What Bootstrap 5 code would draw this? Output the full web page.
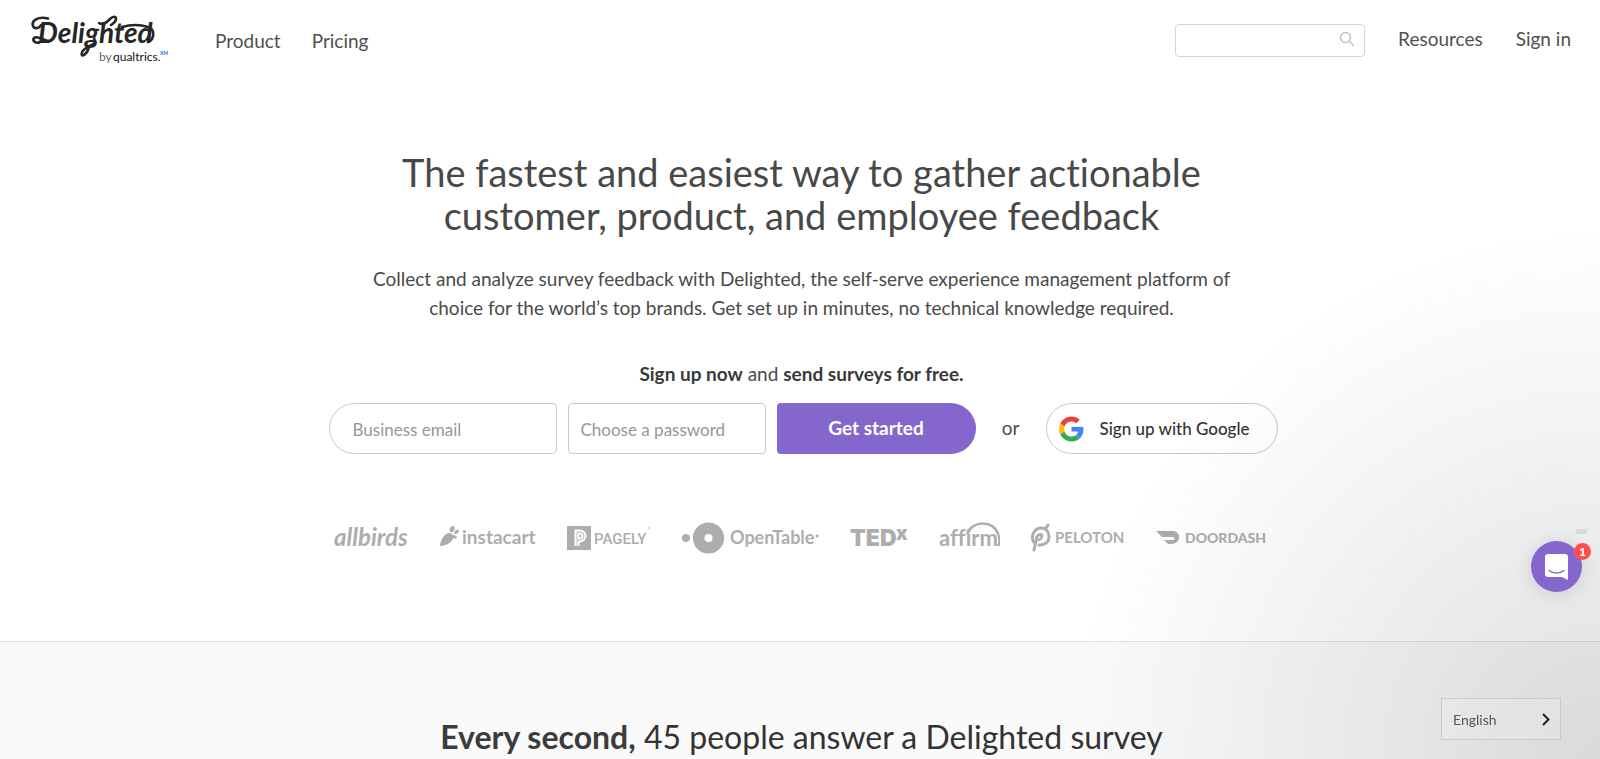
<!DOCTYPE html>
<html lang="en">
<head>
<meta charset="utf-8">
<meta name="viewport" content="width=device-width, initial-scale=1">
<title>Delighted</title>
<link rel="stylesheet" href="https://cdn.jsdelivr.net/npm/bootstrap@5.3.0/dist/css/bootstrap.min.css">
<style>
  body { font-family: Lato, "Open Sans", sans-serif; color: #4a4a4a; background: #fff; overflow-x: hidden; font-variant-ligatures: none; }
  .site-nav { padding: 14px 29px 0 30px; }
  .site-nav .nav-link { color: #505050; font-size: 19px; line-height: 24px; padding: 0; }
  .nav-main { gap: 31px; margin-left: 47px; padding-top: 15px; }
  .nav-side { gap: 33px; }
  .nav-side .nav-link { padding-top: 13px; }
  .search-box { width: 190px; margin-top: 10px; }
  .search-box .form-control { height: 33px; border-color: #d6d6d6; border-radius: 4px; padding-right: 36px; }
  .search-btn { position: absolute; right: 10px; top: 7px; border: 0; background: none; padding: 0; line-height: 0; }
  .hero { padding: 83px 16px 86px 19px; }
  .hero h1 { font-size: 38px; line-height: 43px; font-weight: 400; max-width: 860px; color: #484848; }
  .hero-copy { font-size: 19px; line-height: 29px; max-width: 880px; margin-top: 27px; }
  .signup-lead { font-size: 19px; line-height: 28px; margin-top: 38px; }
  .signup-lead strong { font-weight: 700; color: #3a3a3a; }
  .signup-row { margin-top: 15px; padding-left: 3px; }
  .signup-row .form-control, .signup-row .btn { height: 51px; font-size: 17px; }
  .signup-fields { gap: 11px; }
  .signup-row .form-control { border-color: #c8c8c8; border-radius: 4px; padding: 2px 12px 0; background: #fff; }
  .signup-row .form-control::placeholder { color: #979797; opacity: 1; }
  .signup-row .email-field { width: 228px; border-radius: 26px 4px 4px 26px; padding-left: 23px; }
  .signup-row .password-field { width: 198px; }
  .signup-row .btn-start { width: 199px; background: #8566cc; color: #fff; font-size: 19px; font-weight: 700; border: 0; border-radius: 4px 26px 26px 4px; }
  .or-word { width: 70px; font-size: 19px; }
  .signup-row .btn-google { width: 232px; border: 1px solid #c8c8c8; border-radius: 26px; color: #333; font-weight: 500; padding: 0 12px; }
  .brands { gap: 31px; margin-top: 68px; fill: #adadad; }
  .brands svg { height: 32px; flex: none; }
  .hero .brands { margin-bottom: 1px; }
  .stats { background: #fafafa; border-top: 1px solid #e0e2e2; padding: 75px 16px 0 19px; }
  .stats h2 { font-size: 32px; line-height: 40px; font-weight: 400; color: #333; }
  .stats strong { font-weight: 700; color: #3c3c3c; }
  .corner-shade { position: fixed; right: 0; bottom: 0; width: 530px; height: 530px; pointer-events: none;
    background: radial-gradient(circle 530px at bottom right, rgba(29,39,54,.15), rgba(29,39,54,0)); }
  .chat { position: fixed; right: 18px; bottom: 167px; }
  .chat-btn { width: 51px; height: 51px; border: 0; border-radius: 50%; background: #8566cc; padding: 0; box-shadow: 0 2px 20px rgba(0,0,0,.12); }
  .chat-count { position: absolute; right: -9px; top: 2px; width: 17px; height: 17px; border-radius: 50%; background: #ff4f4b; color: #fff; font-size: 12px; line-height: 17px; font-weight: 900; text-align: center; }
  .chat-tab { position: absolute; right: -5px; top: -12px; width: 11px; height: 5px; background: #d8dad7; }
  .lang-btn { position: fixed; right: 39px; bottom: 19px; width: 120px; height: 42px; border: 1px solid #c8cacb; background: rgba(255,255,255,.15); color: #555; font-size: 14px; padding: 0 10px 0 11px; }
</style>
</head>
<body class="d-flex flex-column min-vh-100">
<header class="site-nav d-flex align-items-start">
  <a href="#" aria-label="Delighted by Qualtrics">
    <svg width="138" height="54" viewBox="0 0 138 54" font-family="Lato, sans-serif">
      <text x="8" y="29" font-size="28" font-weight="700" font-style="italic" fill="#262626">Delighted</text>
      <g fill="none" stroke="#262626" stroke-width="2.600" stroke-linecap="round">
        <path d="M18 4.500C9 2 1 6 3 12c1 3 6 3 8-1"/>
        <path d="M10 28c-4 2-8-1-6-4 3-3 9 2 15 3"/>
        <path d="M69 9c4 3 8-1 11-4s6-3 6 0c0 2-2 4-5 6"/>
        <path d="M92 13c10-3 20-2 26 0 7 2 7 12 0 15"/>
        <path d="M59 32c-1 8-9 13-7 6 2-4 8-6 13-9"/>
      </g>
      <text x="69" y="47" font-size="12" fill="#666">by</text>
      <text x="83" y="47" font-size="12" fill="#111">qualtrics.</text>
      <text x="130" y="41" font-size="5" font-weight="900" fill="#1a7cf0">XM</text>
    </svg>
  </a>
  <nav class="nav nav-main" aria-label="Main">
    <a class="nav-link" href="#">Product</a>
    <a class="nav-link" href="#">Pricing</a>
  </nav>
  <div class="nav nav-side ms-auto">
    <form class="search-box position-relative" role="search">
      <input class="form-control" type="search" aria-label="Search">
      <button class="search-btn" type="submit" aria-label="Submit search">
        <svg width="16" height="16" fill="none" stroke="#c4c4c4" stroke-width="1.600"><circle cx="6.500" cy="6.500" r="5"/><path d="M10.200 10.200 15 15"/></svg>
      </button>
    </form>
    <a class="nav-link" href="#">Resources</a>
    <a class="nav-link" href="#">Sign in</a>
  </div>
</header>

<main class="d-flex flex-column flex-grow-1">
  <section class="hero text-center">
    <h1 class="mx-auto mb-0">The fastest and easiest way to gather actionable<br>customer, product, and employee feedback</h1>
    <p class="hero-copy mx-auto mb-0">Collect and analyze survey feedback with Delighted, the self-serve experience management platform of<br>choice for the world’s top brands. Get set up in minutes, no technical knowledge required.</p>
    <p class="signup-lead mb-0"><strong>Sign up now</strong> and <strong>send surveys for free.</strong></p>

    <form class="signup-row d-flex flex-wrap justify-content-center align-items-center">
      <div class="signup-fields d-flex">
        <input class="form-control email-field" type="email" placeholder="Business email" aria-label="Business email">
        <input class="form-control password-field" type="password" placeholder="Choose a password" aria-label="Choose a password">
        <button class="btn btn-start" type="submit">Get started</button>
      </div>
      <span class="or-word">or</span>
      <button class="btn btn-google d-flex align-items-center" type="button">
        <svg width="25" height="26" viewBox="0 0 48 48" class="me-3" aria-hidden="true">
          <path fill="#ea4335" d="M24 9.500c3.540 0 6.710 1.220 9.210 3.600l6.850-6.850C35.900 2.380 30.470 0 24 0 14.620 0 6.510 5.380 2.560 13.220l7.980 6.190C12.430 13.720 17.740 9.500 24 9.500z"/>
          <path fill="#4285f4" d="M46.980 24.550c0-1.570-.15-3.090-.38-4.550H24v9.020h12.940c-.58 2.960-2.260 5.480-4.780 7.180l7.730 6c4.510-4.180 7.090-10.360 7.090-17.650z"/>
          <path fill="#fbbc05" d="M10.530 28.590c-.48-1.450-.76-2.990-.76-4.590s.27-3.140.76-4.590l-7.980-6.190C.92 16.460 0 20.120 0 24c0 3.880.92 7.540 2.560 10.780l7.970-6.190z"/>
          <path fill="#34a853" d="M24 48c6.480 0 11.930-2.130 15.890-5.810l-7.730-6c-2.150 1.450-4.920 2.300-8.160 2.300-6.260 0-11.570-4.220-13.470-9.910l-7.980 6.190C6.510 42.620 14.620 48 24 48z"/>
        </svg>
        <span>Sign up with Google</span>
      </button>
    </form>

    <div class="brands d-flex flex-wrap justify-content-center" aria-label="Customers">
      <svg width="75" font-family="Lato, sans-serif"><text x="0" y="24" font-size="24" font-style="italic" font-weight="700">allbirds</text></svg>
      <svg width="96" font-family="Lato, sans-serif">
        <path d="M0 24c0-4 3-11 8-13 3-1 7 3 5 6-3 5-9 7-13 7zM10 10c-1-4 1-6 4-6 1 2 1 4-1 6zM14 11c1-3 3-4 5-3 0 3-2 4-4 4zM13 13c2 0 4 1 4 3-2 1-4 0-4-1z"/>
        <text x="22" y="22" font-size="19" font-weight="700">instacart</text>
      </svg>
      <svg width="84">
        <rect y="4" width="24" height="24"/>
        <g fill="none" stroke="#fff"><path stroke-width="5" d="M10 24V10h3a3.500 3.500 0 0 1 0 8h-3"/><path stroke="#adadad" stroke-width=".8" d="M10 24V10h3a3.500 3.500 0 0 1 0 8h-3"/></g>
        <text x="27" y="22" font-size="15" font-weight="500" font-family="Roboto, sans-serif">PAGELY</text>
        <circle cx="82" cy="6" r=".8"/>
      </svg>
      <svg width="137" font-family="Lato, sans-serif">
        <circle cx="4" cy="16" r="4"/><circle cx="26.500" cy="16" r="9.800" fill="none" stroke="#adadad" stroke-width="11.600"/>
        <text x="48" y="22" font-size="18" font-weight="700">OpenTable</text><circle cx="135" cy="14" r="1.500"/>
      </svg>
      <svg width="58" font-family="Inter, sans-serif" font-weight="900"><text x="0" y="24" font-size="23">TED</text><text x="46" y="18" font-size="19">x</text></svg>
      <svg width="61" font-family="Lato, sans-serif">
        <text x="0" y="24" font-size="22" font-weight="700">affirm</text>
        <path d="M28 12C33-2 55-2 59 12c2 5 2 9 0 12" fill="none" stroke="#adadad" stroke-width="2.400"/>
      </svg>
      <svg width="94" font-family="Lato, sans-serif">
        <g fill="none" stroke="#adadad" stroke-linecap="round"><path stroke-width="3" d="M2.500 20C-1 12 5 6 10 6c6 0 8 5 8 9 0 5-4 8-9 8H8M11 14c0-2-4-2-5 1L3 28M15 6l2-3"/><path stroke-width="2.500" d="M11 14c0 2-1 3-3 4"/></g>
        <text x="24" y="21" font-size="15" font-weight="700">PELOTON</text>
      </svg>
      <svg width="113" font-family="Lato, sans-serif">
        <path d="M0 9h17c8 0 9 13-2 13h-3l-4-4h9c2 0 2-3 0-3H6z"/>
        <text x="29" y="21" font-size="14" font-weight="900">DOORDASH</text>
      </svg>
    </div>
  </section>

  <section class="stats text-center flex-grow-1">
    <h2 class="mb-0"><strong>Every second,</strong> 45 people answer a Delighted survey</h2>
  </section>
</main>

<div class="corner-shade"></div>
<div class="chat">
  <span class="chat-tab"></span>
  <button class="chat-btn" type="button" aria-label="Open chat">
    <svg width="24" height="26" viewBox="0 0 24 26" aria-hidden="true"><path fill="#fff" d="M3 0h17a3 3 0 0 1 3 3v23l-6-3H3a3 3 0 0 1-3-3V3a3 3 0 0 1 3-3z"/><path d="M4 16.500c4 3.500 11 3.500 15 0" fill="none" stroke="#8566cc" stroke-width="1.300" stroke-linecap="round"/></svg>
  </button>
  <span class="chat-count">1</span>
</div>
<button class="lang-btn d-flex align-items-center justify-content-between" type="button">English
  <svg width="8" height="13" fill="none" stroke="#222" stroke-width="2"><path d="M1 1l5.500 5.500L1 12"/></svg>
</button>
<script src="https://cdn.jsdelivr.net/npm/bootstrap@5.3.0/dist/js/bootstrap.bundle.min.js"></script>
</body>
</html>
